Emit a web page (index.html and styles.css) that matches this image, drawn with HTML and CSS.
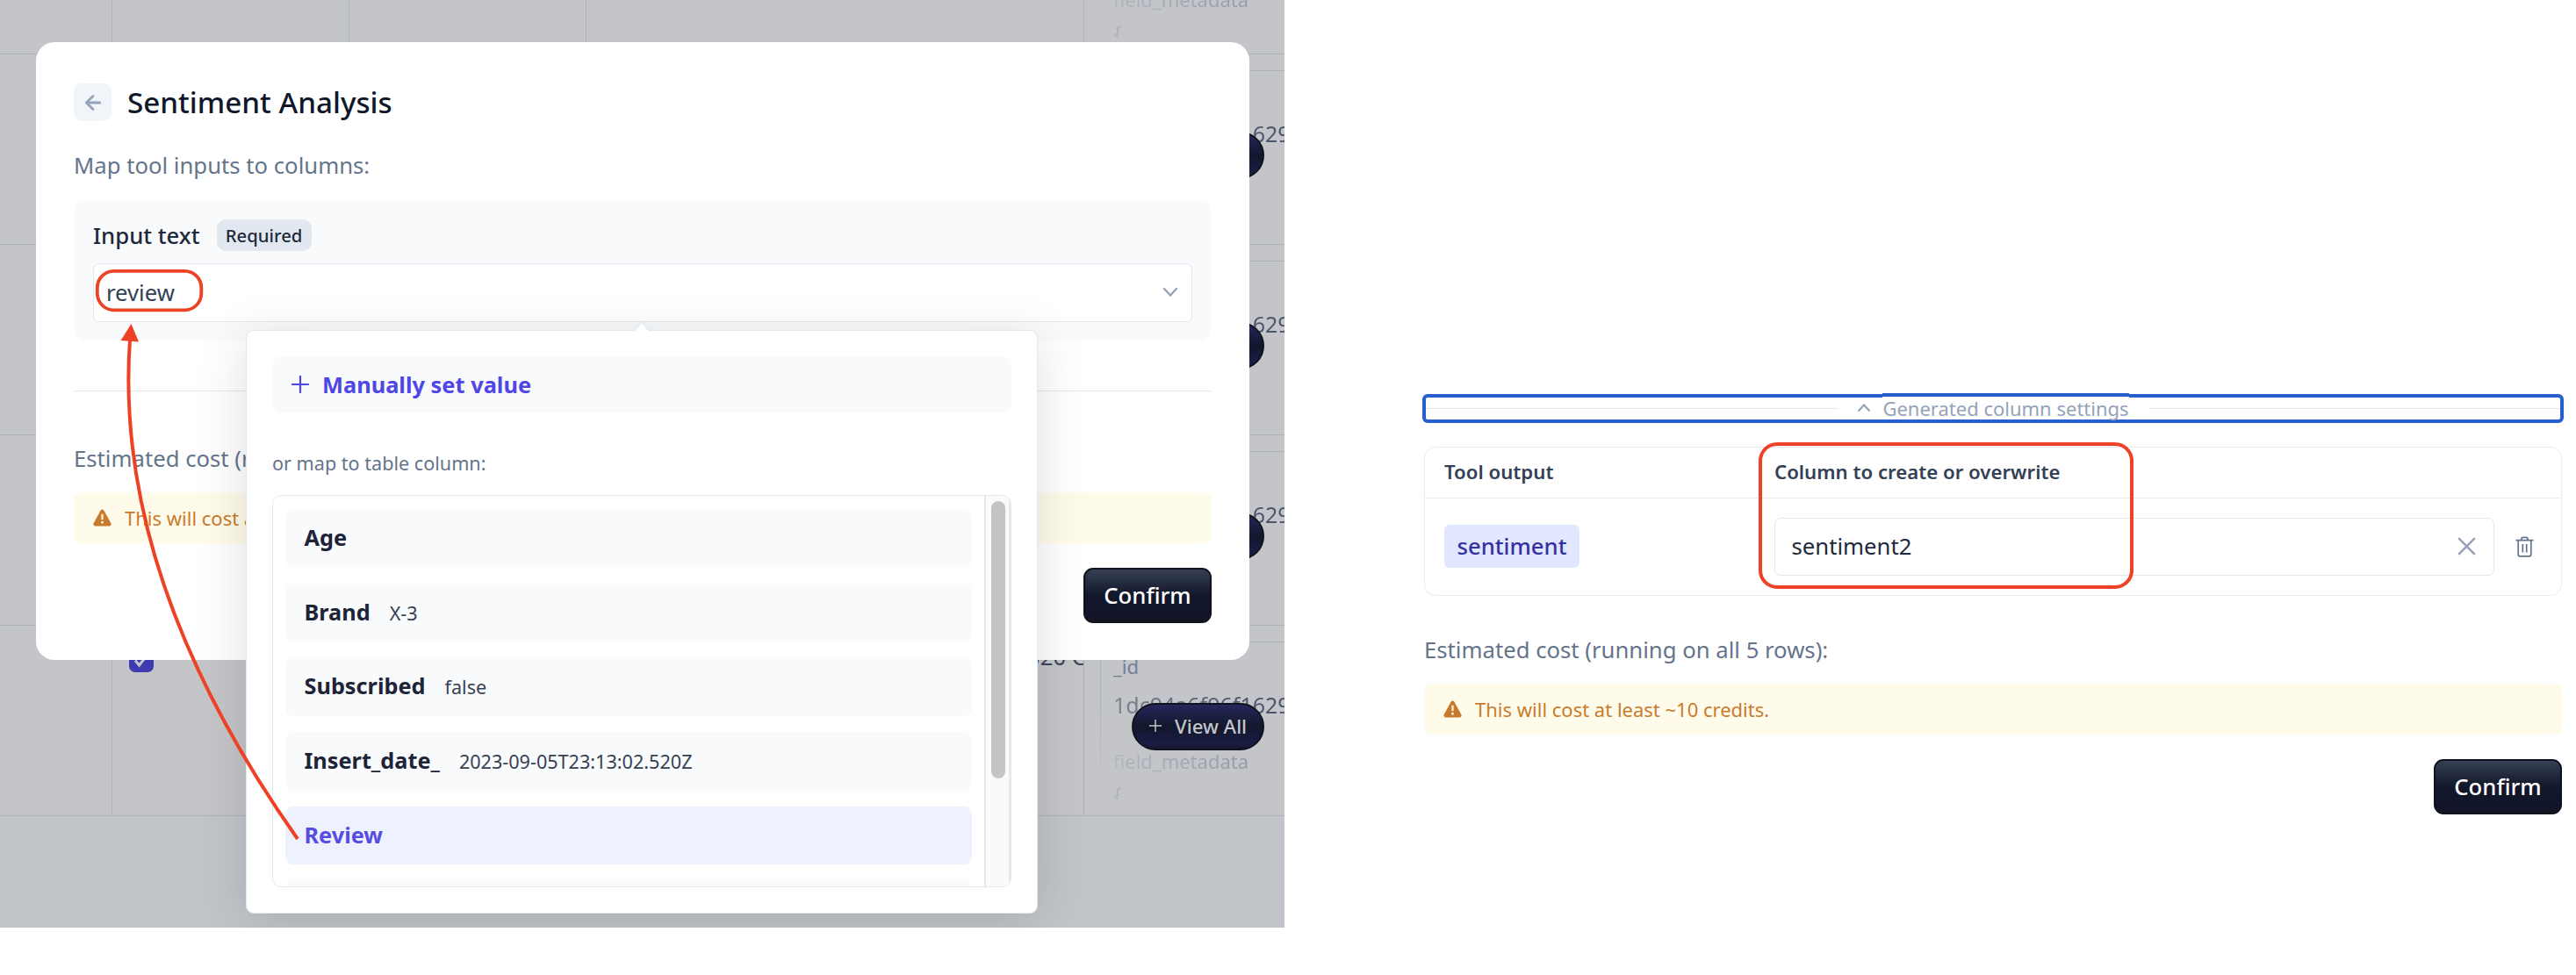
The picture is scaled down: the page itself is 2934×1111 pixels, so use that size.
FILE: index.html
```html
<!DOCTYPE html>
<html lang="en">
<head>
<meta charset="utf-8">
<title>Sentiment Analysis</title>
<link rel="stylesheet" href="styles.css">
</head>
<body>
<svg class="defs" width="0" height="0" aria-hidden="true">
  <symbol id="warn" viewBox="0 0 22 20"><path fill="currentColor" fill-rule="evenodd" d="M9.1 1.1a2.2 2.2 0 0 1 3.8 0l8.3 15.2A2.4 2.4 0 0 1 19.2 20H2.8A2.4 2.4 0 0 1 .8 16.300ZM9.900 5.500v6.800h2.200V5.500ZM9.700 14.300v2.500h2.600v-2.500Z"/></symbol>
</svg>
<main class="board">
  <section class="app">
    <div class="table">
      <div class="row"><i class="cell"></i><i class="cell"></i><i class="cell"></i><i class="cell wide"></i><div class="rec"><div class="record"><p class="key">_id</p><p class="val">1dc94a6f96f1629</p><p class="key faded">field_metadata</p><p class="val brace">{</p></div></div></div>
      <div class="row"><i class="cell"></i><i class="cell"></i><i class="cell"></i><i class="cell wide"></i><div class="rec"><div class="record"><p class="key">&nbsp;</p><p class="val">1dc94a6f96f1629</p></div><span class="viewall"></span></div></div>
      <div class="row"><i class="cell"></i><i class="cell"></i><i class="cell"></i><i class="cell wide"></i><div class="rec"><div class="record"><p class="key">&nbsp;</p><p class="val">1dc94a6f96f1629</p></div><span class="viewall"></span></div></div>
      <div class="row"><i class="cell"></i><i class="cell"></i><i class="cell"></i><i class="cell wide"></i><div class="rec"><div class="record"><p class="key">&nbsp;</p><p class="val">1dc94a6f96f1629</p></div><span class="viewall"></span></div></div>
      <div class="row"><i class="cell"></i><div class="cell check"><span class="box"><svg width="28" height="28" viewBox="0 0 28 28"><path d="M7 14.500l4.500 5.500 8-10" fill="none" stroke="#c4c5c9" stroke-width="3"/></svg></span></div><i class="cell"></i><div class="cell wide date">020 C</div><div class="rec"><div class="record"><p class="key">_id</p><p class="val">1dc94a6f96f1629</p><p class="key faded">field_metadata</p><p class="val brace">{</p></div><span class="viewall"><svg width="14" height="14" viewBox="0 0 14 14"><path d="M7 0v14M0 7h14" stroke="#c5c6ca" stroke-width="1.500"/></svg><span>View All</span></span></div></div>
    </div>

    <div class="modal">
      <header class="head">
        <span class="back"><svg width="18" height="18" viewBox="0 0 18 18"><path d="M17 9H1.500M9 1.500L1.300 9L9 16.500" fill="none" stroke="#94a3b8" stroke-width="2.800" stroke-linecap="round" stroke-linejoin="round"/></svg></span>
        <h1 class="title">Sentiment Analysis</h1>
      </header>
      <p class="sub">Map tool inputs to columns:</p>
      <div class="panel">
        <div class="label"><span class="name">Input text</span><span class="req">Required</span></div>
        <div class="select"><span>review</span><svg width="18" height="12" viewBox="0 0 18 12"><path d="M2 2l7 7.500L16 2" fill="none" stroke="#94a3b8" stroke-width="2.400" stroke-linecap="round"/></svg></div>
      </div>
      <hr class="rule">
      <p class="cost">Estimated cost (r</p>
      <div class="alert"><svg width="21" height="20"><use href="#warn"/></svg><span>This will cost at</span></div>
      <button class="confirm">Confirm</button>
    </div>

    <div class="popover">
      <svg class="caret" width="20" height="12" viewBox="0 0 20 12"><path d="M1 12L10 1l9 11z" fill="#fff"/><path d="M1 11.500L10 1l9 10.500" fill="none" stroke="#e2e8f0" stroke-width="1.500"/></svg>
      <div class="manual"><svg width="20" height="20" viewBox="0 0 20 20"><path d="M10 1v18M1 10h18" stroke="#4f46e5" stroke-width="2.200" stroke-linecap="round"/></svg><span>Manually set value</span></div>
      <p class="hint">or map to table column:</p>
      <div class="list">
        <div class="items">
          <div class="item"><b>Age</b></div>
          <div class="item"><b>Brand</b><span>X-3</span></div>
          <div class="item"><b>Subscribed</b><span>false</span></div>
          <div class="item"><b>Insert_date_</b><span>2023-09-05T23:13:02.520Z</span></div>
          <div class="item active"><b>Review</b></div>
          <div class="item"></div>
        </div>
        <div class="track"><div class="thumb"></div></div>
      </div>
    </div>

    <svg class="mark" width="400" height="1057" viewBox="0 0 400 1057"><rect x="110.800" y="308.800" width="118.500" height="44.500" rx="19" fill="none" stroke="#ed4226" stroke-width="3.800"/><path d="M339 956C212 776 134 585 148 387" fill="none" stroke="#ed4226" stroke-width="4"/><path d="M149.500 369L158 389.500L137.500 388z" fill="#ed4226"/></svg>
  </section>

  <section class="side">
    <div class="toggle"><i class="ln"></i><span class="tgl"><svg width="16" height="10" viewBox="0 0 16 10"><path d="M1.500 8.500L8 1.500l6.500 7" fill="none" stroke="#94a3b8" stroke-width="2.200"/></svg><span>Generated column settings</span></span><i class="ln"></i><i class="bump"></i></div>
    <div class="card">
      <div class="thead"><span class="c1">Tool output</span><span>Column to create or overwrite</span></div>
      <div class="trow">
        <div class="c1"><span class="tag">sentiment</span></div>
        <div class="field"><span>sentiment2</span><svg width="21" height="21" viewBox="0 0 22 22"><path d="M2 2l18 18M20 2L2 20" stroke="#94a3b8" stroke-width="2.600" stroke-linecap="round"/></svg></div>
        <svg class="trash" width="21" height="24" viewBox="0 0 21 24" fill="none" stroke="#64748b" stroke-width="1.700"><path d="M.5 4.600h20M3.200 4.600v16.200q0 2 2 2h10.600q2 0 2-2V4.600M7 4.600V3q0-1.700 1.700-1.700h3.600Q14 1.300 14 3v1.600M8.300 9v9.500M12.700 9v9.500"/></svg>
      </div>
      <div class="redbox"></div>
    </div>
    <p class="cost">Estimated cost (running on all 5 rows):</p>
    <div class="alert"><svg width="21" height="20"><use href="#warn"/></svg><span>This will cost at least ~10 credits.</span></div>
    <button class="confirm">Confirm</button>
  </section>
</main>
</body>
</html>
```
FILE: styles.css
```css
* { box-sizing: border-box; }
body { margin: 0; background: #fff; font-family: "Noto Sans", sans-serif; }
p, h1 { margin: 0; font-weight: 400; white-space: nowrap; }
svg { display: block; flex: none; }
.defs { position: absolute; }
.board { display: flex; width: 2934px; height: 1111px; overflow: hidden; }
.app { position: relative; width: 1463px; height: 1057px; overflow: hidden; background: #c1c4c9; flex: none; }

/* table behind the dialog */
.table { margin-top: -155px; background: #c4c5c9; }
.row { display: flex; height: 217px; border-bottom: 1px solid #aeb0bb; overflow: hidden; }
.cell { flex: none; width: 270px; border-right: 1px solid #b0b2bd; }
.cell:first-child { width: 128px; }
.cell.wide { width: 567px; }
.check { padding: 25px 0 0 19px; }
.box { display: block; width: 28px; height: 28px; border-radius: 7px; background: #3f3ab0; }
.date { padding: 19px 0 0 502px; overflow: hidden; white-space: nowrap; font-size: 25.7px; line-height: 34px; color: #3c4658; }
.rec { position: relative; flex: 1; padding: 18px 0 0 18px; }
.record { height: 198px; border: solid #aeb0bb; border-width: 1px 0 0 1px; border-image: linear-gradient(#aeb0bb 35%, #c4c5c9 85%) 1; padding: 12px 0 0 14px; }
.key { font-size: 22px; line-height: 30px; color: #6f7e96; }
.val { margin-top: 12px; font-size: 25px; line-height: 34px; color: transparent; background: linear-gradient(90deg, #7c8494, #4b566b 150px); background-clip: text; -webkit-background-clip: text; }
.key.faded { margin-top: 32px; color: transparent; background: linear-gradient(90deg, #b1b6bf, #9299a8 155px); background-clip: text; -webkit-background-clip: text; }
.val.brace { margin-top: 6px; color: #b0b3b9; background: none; height: 23px; overflow: hidden; }
.viewall { position: absolute; left: 54px; top: 88px; width: 151px; height: 54px; display: flex; align-items: center; gap: 15px; padding: 0 0 2px 18px; border-radius: 27px; border: 2px solid #11131c; background: linear-gradient(#26275c, #12172b 50%, #1a1d45 88%, #14172c); font-size: 22.2px; font-weight: 500; color: #c5c6ca; }

/* dialog */
.modal { position: absolute; left: 41px; top: 48px; width: 1382px; height: 704px; padding: 47px 43px 0; border-radius: 21px; background: #fff; display: flex; flex-direction: column; }
.head { display: flex; align-items: center; gap: 18px; height: 43px; }
.back { width: 43px; height: 43px; border-radius: 9px; background: #f1f5f9; display: flex; align-items: center; justify-content: center; }
.title { font-size: 33.2px; font-weight: 500; color: #0f172a; line-height: 43px; }
.sub { margin-top: 34px; font-size: 25.7px; line-height: 34px; color: #64748b; }
.panel { margin-top: 22px; height: 160px; padding: 22px; border-radius: 14px; background: #f8fafc; }
.label { display: flex; align-items: center; gap: 19px; height: 36px; }
.name { font-size: 25.7px; font-weight: 500; color: #1e293b; }
.req { height: 36px; width: 108px; display: flex; align-items: center; justify-content: center; border-radius: 10px; background: #e2e8f0; font-size: 20.3px; font-weight: 500; color: #1e293b; }
.select { margin-top: 14px; height: 67px; padding: 0 15px 1px 14px; display: flex; align-items: center; justify-content: space-between; border: 1px solid #e2e8f0; border-radius: 7px; background: #fff; font-size: 25.7px; color: #334155; }
.rule { width: 100%; margin: 57px 0 0; border: 0; border-top: 1px solid #e5e7eb; }
.cost { font-size: 25.7px; line-height: 34px; color: #64748b; }
.modal .cost { margin-top: 60px; }
.alert { margin-top: 21px; height: 58px; padding-left: 22px; display: flex; align-items: center; gap: 15px; border-radius: 7px; background: #fffbeb; color: #c97b2d; font-size: 22px; }
.confirm { margin-top: 28px; height: 63px; width: 146px; padding: 0; align-self: flex-end; border: 2px solid #10131f; border-radius: 11px; background: linear-gradient(#364052, #12172b 50%, #12152a 90%, #14151f); color: #fff; font: 500 25.7px "Noto Sans", sans-serif; }

/* column picker */
.popover { position: absolute; left: 280px; top: 376px; width: 902px; height: 665px; padding: 29px; border: 1px solid #e2e8f0; border-radius: 9px; background: #fff; box-shadow: 0 10px 60px rgba(0, 0, 0, .13); }
.caret { position: absolute; left: 440px; top: -11px; }
.manual { height: 64px; padding-left: 22px; display: flex; align-items: center; gap: 15px; border-radius: 10px; background: #f8fafc; color: #4f46e5; font-size: 25.4px; font-weight: 700; }
.hint { margin: 43px 0 21px; font-size: 21.6px; line-height: 30px; color: #64748b; }
.list { height: 447px; display: flex; border: 1px solid #e2e8f0; border-radius: 10px; overflow: hidden; }
.items { flex: 1; padding: 15px 14px 0; display: flex; flex-direction: column; gap: 18px; }
.item { flex: none; height: 66.700px; padding-left: 21.500px; display: flex; align-items: baseline; gap: 22px; border-radius: 9px; background: #f8fafc; line-height: 65px; font-size: 21.6px; color: #374151; }
.item b { font-size: 25.3px; font-weight: 700; color: #1e2437; }
.item.active { background: #eef2ff; }
.item.active b { color: #564de0; }
.track { width: 30px; padding: 6px 5px 0 6px; border: solid #e8e8e8; border-width: 0 2px; background: #fafafa; }
.thumb { width: 16px; height: 316px; border-radius: 8px; background: #c4c4c4; }
.mark { position: absolute; left: 0; top: 0; }

/* output settings */
.side { flex: 1; padding: 449px 16px 0 159px; display: flex; flex-direction: column; }
.toggle { position: relative; margin: 0 -2px; height: 33px; border: 4px solid #2760cc; border-radius: 6px; display: flex; align-items: center; }
.ln { flex: 1; height: 1px; margin-top: -1px; background: #e2e5ea; }
.tgl { display: flex; align-items: center; gap: 13px; padding: 0 22px 1px; font-size: 22px; line-height: 25px; color: #94a3b8; }
.bump { position: absolute; left: 520px; top: -5px; width: 281px; height: 5px; background: #2760cc; border-bottom: 1px solid #fff; }
.card { position: relative; margin-top: 27px; height: 170px; border: 1px solid #e8ebf1; border-radius: 13px; }
.thead { display: flex; align-items: center; height: 58px; padding: 0 0 2px 22px; border-bottom: 1px solid #e8ebf1; font-size: 22.2px; font-weight: 600; color: #334155; }
.c1 { width: 376px; flex: none; }
.trow { display: flex; align-items: center; height: 110px; padding: 0 0 1px 22px; }
.tag { display: flex; align-items: center; justify-content: center; width: 154px; height: 49px; padding-bottom: 1px; border-radius: 6px; background: #e0e7ff; color: #3730a3; font-size: 25.7px; font-weight: 500; }
.field { width: 820px; height: 66px; padding: 0 20px 0 18.500px; display: flex; align-items: center; justify-content: space-between; border: 1px solid #e2e8f0; border-radius: 7px; font-size: 25.7px; color: #1e293b; }
.trash { margin-left: 24px; }
.redbox { position: absolute; left: 380px; top: -6px; width: 427px; height: 167px; border: 4px solid #ed4226; border-radius: 21px; }
.side .cost { margin-top: 45px; }
```
